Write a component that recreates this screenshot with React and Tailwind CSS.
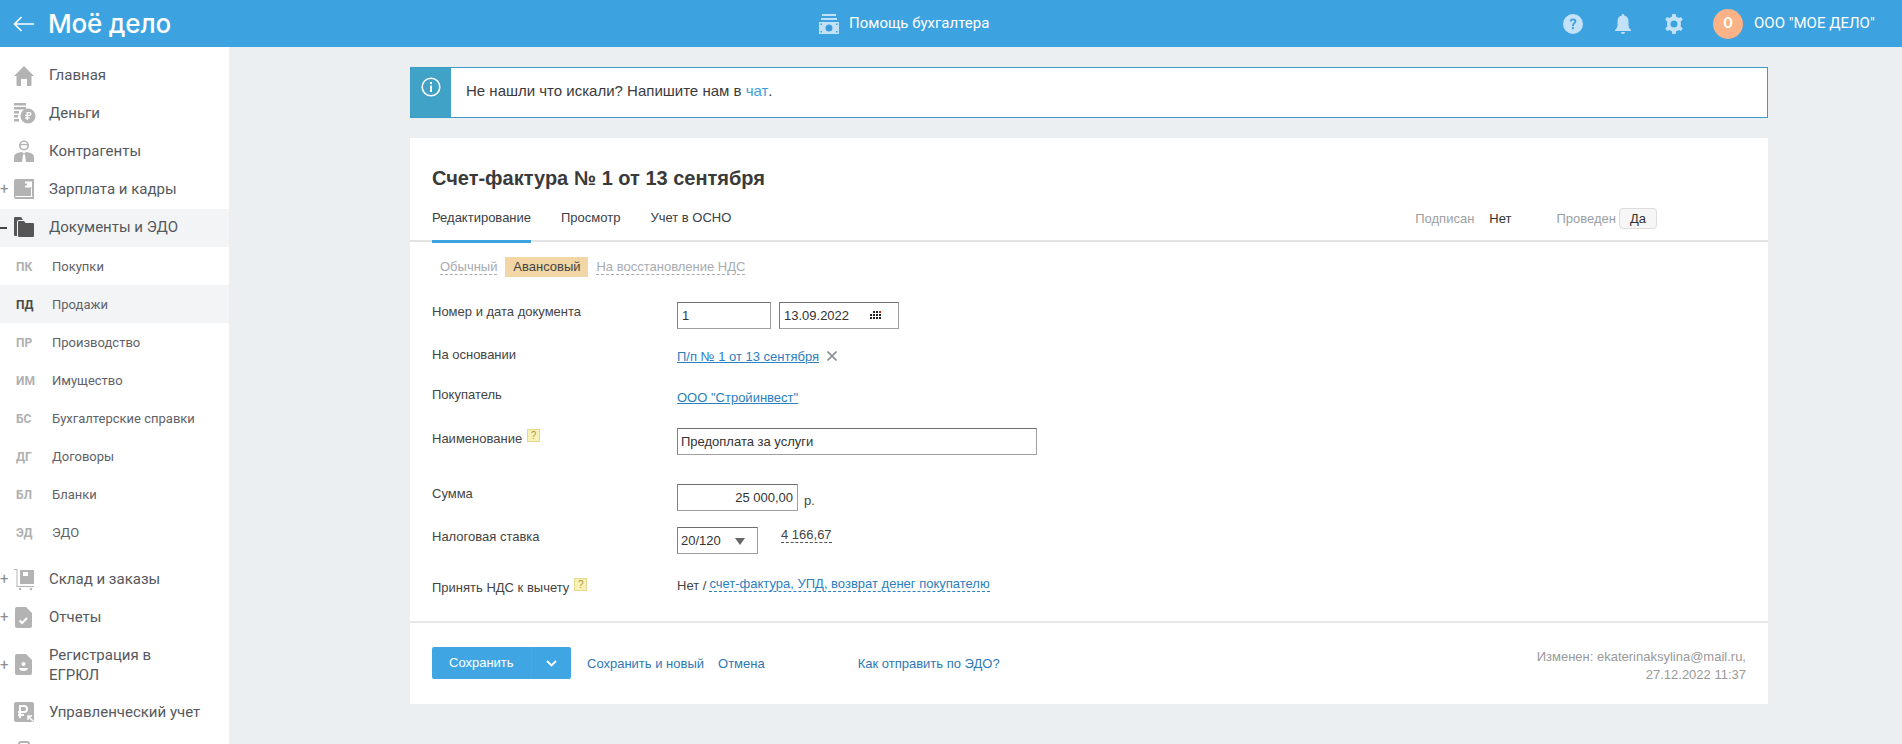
import React from "react";

const Gray = "#b3b3b3";

const icons = {
  home: (c) => <path fill={c} d="M10 1 L20 11 H17.5 V20 Q17.5 21 16.5 21 H13 V14 H7 V21 H3.5 Q2.5 21 2.5 20 V11 H0 Z" />,
  money: (c) => (
    <g fill={c}>
      <rect x="0" y="0" width="12" height="2.5" /><rect x="0" y="4" width="12" height="2.5" />
      <rect x="0" y="8" width="5" height="2.5" /><rect x="0" y="12" width="4" height="2.5" /><rect x="0" y="16" width="5" height="2.5" />
      <circle cx="14" cy="13" r="7.5" />
      <path d="M12.5 9 H15.5 Q17.5 9 17.5 11 Q17.5 13 15.5 13 H13.8 V14.2 H16 V15.4 H13.8 V17 H12.5 V15.4 H11 V14.2 H12.5 V13 H11 V11.8 H12.5 Z M13.8 10.2 V11.8 H15.4 Q16.2 11.8 16.2 11 Q16.2 10.2 15.4 10.2 Z" fill="#fff" />
    </g>
  ),
  person: (c) => (
    <g fill={c}>
      <circle cx="10" cy="4.5" r="4.2" fill="none" stroke={c} strokeWidth="1.6" />
      <path d="M5.8 3 H14.2 V4.2 H5.8 Z" />
      <path d="M0 21 V16 Q0 12.5 5 11.5 L8 11 L10 12.5 L12 11 L15 11.5 Q20 12.5 20 16 V21 H12 L11 13.5 H9 L8 21 Z" />
    </g>
  ),
  wallet: (c) => (
    <g fill={c}>
      <path fillRule="evenodd" d="M0 2 Q0 0 2 0 H20 V20 H2 Q0 20 0 18 Z M11 2.5 V8.5 H18 V2.5 Z" />
      <rect x="11" y="4.5" width="2" height="2" />
      <rect x="1.5" y="17" width="17" height="1" fill="#fff" />
      <rect x="17" y="9" width="1" height="8" fill="#fff" />
    </g>
  ),
  folder: (c) => (
    <g fill={c}>
      <path d="M0 1 Q0 0 1 0 H7 L9 3 H5 Q3 3 3 5 V19 H1 Q0 19 0 18 Z" />
      <path d="M4 5 Q4 4 5 4 H10 L11.5 6 H19 Q20 6 20 7 V19 Q20 20 19 20 H5 Q4 20 4 19 Z" />
    </g>
  ),
  cart: (c) => (
    <g fill={c}>
      <path d="M0 0 H3.5 V17 H20 V18 H2.5 V1 H0 Z" />
      <path d="M6 1 H20 V15 H6 Z M9 3 V7 H14 V3 Z" fillRule="evenodd" />
      <circle cx="6" cy="20" r="1.2" /><circle cx="17" cy="20" r="1.2" />
    </g>
  ),
  report: (c) => (
    <g>
      <path fill={c} d="M3 0 H12 L18 6 V19 Q18 21 16 21 H3 Q1 21 1 19 V2 Q1 0 3 0 Z" />
      <path fill="none" stroke="#fff" strokeWidth="2" d="M5.5 13.5 L8 16 L13 11" />
    </g>
  ),
  reg: (c) => (
    <g>
      <path fill={c} d="M3 0 H12 L18 6 V19 Q18 21 16 21 H3 Q1 21 1 19 V2 Q1 0 3 0 Z" />
      <circle cx="9.5" cy="10" r="2" fill="#fff" />
      <path fill="#fff" d="M5 14 H14 Q13.5 17 9.5 17 Q5.5 17 5 14 Z" />
    </g>
  ),
  rub: (c) => (
    <g>
      <rect x="0" y="0" width="20" height="20" rx="2" fill={c} />
      <path fill="none" stroke="#fff" strokeWidth="2" d="M6 16 V4 H10 Q13 4 13 7 Q13 10 10 10 H4 M4 13 H10" />
      <path fill="none" stroke="#fff" strokeWidth="1.5" d="M19 19 L14 14 M14 18 V14 H18" />
    </g>
  ),
};

function MainItem({ icon, label, plus, active, tall, iconColor }) {
  return (
    <div className={`relative flex items-center pl-[14px] ${tall ? "h-[57px]" : "h-[38px]"} ${active ? "bg-[#f3f4f5] pb-[2px]" : ""}`}>
      {plus && <span className="absolute left-0 top-1/2 -translate-y-1/2 text-[15px] leading-none text-[#8c8c8c]">+</span>}
      {active && <span className="absolute left-0 top-1/2 h-[2px] w-[7px] -translate-y-1/2 bg-[#444]" />}
      <svg width="20" height="21" viewBox="0 0 20 21" className="shrink-0 overflow-visible">{icons[icon](iconColor || Gray)}</svg>
      <span className="ml-[15px] w-[170px] text-[15px] leading-[20px] text-[#55595e]">{label}</span>
    </div>
  );
}

function SubItem({ code, label, active }) {
  return (
    <div className={`flex h-[38px] items-center pl-[16px] pt-[2px] ${active ? "bg-[#f3f4f5]" : ""}`}>
      <span className={`w-[36px] text-[12px] font-bold ${active ? "text-[#4a4a4a]" : "text-[#b0b0b0]"}`}>{code}</span>
      <span className="text-[13px] text-[#5f6368]">{label}</span>
    </div>
  );
}

function Sidebar() {
  return (
    <aside className="h-full w-[229px] shrink-0 overflow-hidden bg-white pt-[9px] font-['Roboto',sans-serif]">
      <MainItem icon="home" label="Главная" />
      <MainItem icon="money" label="Деньги" />
      <MainItem icon="person" label="Контрагенты" />
      <MainItem icon="wallet" label="Зарплата и кадры" plus />
      <div className="h-[1px]" />
      <MainItem icon="folder" label="Документы и ЭДО" active iconColor="#555" />
      <SubItem code="ПК" label="Покупки" />
      <SubItem code="ПД" label="Продажи" active />
      <SubItem code="ПР" label="Производство" />
      <SubItem code="ИМ" label="Имущество" />
      <SubItem code="БС" label="Бухгалтерские справки" />
      <SubItem code="ДГ" label="Договоры" />
      <SubItem code="БЛ" label="Бланки" />
      <SubItem code="ЭД" label="ЭДО" />
      <div className="h-[9px]" />
      <MainItem icon="cart" label="Склад и заказы" plus />
      <MainItem icon="report" label="Отчеты" plus />
      <MainItem icon="reg" label={<>Регистрация в<br />ЕГРЮЛ</>} plus tall />
      <MainItem icon="rub" label="Управленческий учет" />
      <div className="mt-[10px] ml-[18px] h-[10px] w-[12px] rounded-t-[3px] border-2 border-b-0 border-[#b3b3b3]" />
    </aside>
  );
}

function Header() {
  const ic = "#c3e2f7";
  return (
    <header className="relative flex h-[47px] shrink-0 items-center bg-[#3ca2e0] font-['Roboto',sans-serif] text-white">
      <svg width="22" height="16" viewBox="0 0 22 16" className="ml-[13px]" fill="none" stroke="#fff" strokeWidth="1.6">
        <path d="M21 8 H1.5 M8.5 1 L1.5 8 L8.5 15" />
      </svg>
      <span className="ml-[13px] font-['Inter',sans-serif] text-[26px] font-medium leading-none tracking-[-0.2px]">Моё дело</span>

      <div className="absolute left-[819px] top-0 flex h-[47px] items-center">
        <svg width="20" height="20" viewBox="0 0 20 20" fill={ic}>
          <rect x="3" y="0" width="14" height="2" />
          <rect x="2" y="4" width="16" height="2" />
          <path fillRule="evenodd" d="M0 8 H20 V20 H0 Z M10 10.5 A3.5 3.5 0 1 0 10 17.5 A3.5 3.5 0 1 0 10 10.5 Z M1.5 9.5 V11 H3 V9.5 Z M17 9.5 V11 H18.5 V9.5 Z M1.5 17 V18.5 H3 V17 Z M17 17 V18.5 H18.5 V17 Z" />
          <circle cx="10" cy="14" r="2.6" fill="#3c9ad8" />
        </svg>
        <span className="ml-[10px] text-[15px]">Помощь бухгалтера</span>
      </div>

      <div className="absolute left-[1563px] top-0 flex h-[47px] items-center">
        <svg width="20" height="20" viewBox="0 0 20 20">
          <circle cx="10" cy="10" r="10" fill={ic} />
          <path d="M6.8 7.6 Q7 4.4 10.2 4.4 Q13.4 4.5 13.4 7.2 Q13.4 8.8 11.8 9.8 Q10.8 10.5 10.8 12 H9 Q9 9.8 10.6 8.8 Q11.4 8.2 11.4 7.3 Q11.3 6.2 10.1 6.2 Q8.9 6.2 8.8 7.6 Z" fill="#3ca2e0" />
          <rect x="9" y="13" width="1.9" height="2.2" fill="#3ca2e0" />
        </svg>
        <svg width="18" height="20" viewBox="0 0 18 20" fill={ic} className="ml-[31px]">
          <path d="M9 0 Q10.2 0 10.2 1.4 Q14.5 2.4 14.5 7.5 V11.5 Q14.5 14 17 16 V17 H1 V16 Q3.5 14 3.5 11.5 V7.5 Q3.5 2.4 7.8 1.4 Q7.8 0 9 0 Z" />
          <path d="M6.8 18 H11.2 Q10.8 20 9 20 Q7.2 20 6.8 18 Z" />
        </svg>
        <svg width="20" height="20" viewBox="0 0 24 24" className="ml-[32px]">
          <path fill={ic} fillRule="evenodd" d="M10 0 H14 L14.6 3.2 Q16.2 3.7 17.5 4.7 L20.5 3.5 L22.5 7 L20 9 Q20.3 10.5 20.3 12 Q20.3 13.5 20 15 L22.5 17 L20.5 20.5 L17.5 19.3 Q16.2 20.3 14.6 20.8 L14 24 H10 L9.4 20.8 Q7.8 20.3 6.5 19.3 L3.5 20.5 L1.5 17 L4 15 Q3.7 13.5 3.7 12 Q3.7 10.5 4 9 L1.5 7 L3.5 3.5 L6.5 4.7 Q7.8 3.7 9.4 3.2 Z M12 7.8 A4.2 4.2 0 1 0 12 16.2 A4.2 4.2 0 1 0 12 7.8 Z" />
        </svg>
        <div className="ml-[29px] flex h-[30px] w-[30px] items-center justify-center rounded-full bg-[#fbb286] text-[14px] font-bold">О</div>
        <span className="ml-[11px] text-[15px]">ООО "МОЕ ДЕЛО"</span>
      </div>
    </header>
  );
}

function Help() {
  return <span className="ml-[5px] inline-flex h-[13px] w-[13px] items-center justify-center border border-[#e3d88f] bg-[#f9f1b8] text-[10px] leading-none text-[#a89a45]">?</span>;
}

function Row({ label, help, h, mb, children, labelTop = 0 }) {
  return (
    <div className={`flex ${h} ${mb}`}>
      <div className="flex w-[245px] shrink-0 items-start" style={{ paddingTop: labelTop }}>
        <span>{label}</span>{help && <Help />}
      </div>
      <div className="flex items-start">{children}</div>
    </div>
  );
}

const inputCls = "flex h-[27px] items-center border border-[#a0a0a0] border-t-[#6e6e6e] border-l-[#808080] bg-white pr-[4px] text-[13px] text-[#333]";

function Card() {
  return (
    <section className="mt-[20px] h-[566px] bg-white font-['Liberation_Sans',sans-serif] text-[13px] text-[#444]">
      <div className="px-[22px] pt-[27px]">
        <h1 className="text-[20px] font-bold leading-[26px] text-[#3a3a3a]">Счет-фактура № 1 от 13 сентября</h1>
      </div>
      <div className="mt-[13px] flex h-[38px] items-start border-b-2 border-[#e3e3e3] pl-[22px] pr-[111px]">
        <div className="relative flex h-[38px] w-[99px] items-start pt-[4px] text-[#3a4048]">
          Редактирование
          <span className="absolute bottom-[-1px] left-0 h-[3px] w-full bg-[#3ca2e0]" />
        </div>
        <span className="ml-[30px] pt-[4px] text-[#3a4048]">Просмотр</span>
        <span className="ml-[30px] pt-[4px] text-[#3a4048]">Учет в ОСНО</span>
        <div className="ml-auto flex items-center pt-[4px]">
          <span className="text-[#9a9ea3]">Подписан</span>
          <span className="ml-[15px] text-[#333]">Нет</span>
          <span className="ml-[45px] text-[#9a9ea3]">Проведен</span>
          <span className="ml-[3px] flex h-[21px] w-[38px] items-center justify-center rounded-[4px] border border-[#ddd] bg-[#f6f6f6] text-[#333]">Да</span>
        </div>
      </div>
      <div className="mt-[15px] flex h-[20px] items-center pl-[30px]">
        <span className="border-b border-dashed border-[#aaa] leading-[14px] text-[#a8acb0]">Обычный</span>
        <span className="ml-[8px] flex h-[20px] w-[83px] items-center justify-center bg-[#f2d6a6] text-[#444]">Авансовый</span>
        <span className="ml-[8px] border-b border-dashed border-[#aaa] leading-[14px] text-[#a8acb0]">На восстановление НДС</span>
      </div>

      <div className="mt-[25px] px-[22px]">
        <Row label="Номер и дата документа" h="h-[27px]" mb="mb-[16px]" labelTop={0}>
          <div className={`${inputCls} w-[94px] pl-[4px]`}>1</div>
          <div className={`${inputCls} relative ml-[8px] w-[120px] pl-[4px]`}>
            13.09.2022
            <svg width="11" height="9" viewBox="0 0 11 9" className="absolute left-[90px] top-[8px]">
              <g fill="#222">
                {[0, 3, 6].map((y) => [0, 3, 6, 9].map((x) => (x === 0 && y === 0 ? null : <rect key={`${x}-${y}`} x={x} y={y} width="2" height="2" fill={x === 9 && y === 0 ? "#e02020" : "#222"} />)))}
              </g>
            </svg>
          </div>
        </Row>
        <Row label="На основании" h="h-[20px]" mb="mb-[20px]" labelTop={0}>
          <a className="pt-[2px] text-[#2a80c0] underline">П/п № 1 от 13 сентября</a>
          <svg width="10" height="10" viewBox="0 0 10 10" className="ml-[8px] mt-[6px]" stroke="#8a8f94" strokeWidth="1.6"><path d="M0.5 0.5 L9.5 9.5 M9.5 0.5 L0.5 9.5" /></svg>
        </Row>
        <Row label="Покупатель" h="h-[20px]" mb="mb-[23px]">
          <a className="pt-[3px] text-[#2a80c0] underline">ООО "Стройинвест"</a>
        </Row>
        <Row label="Наименование" help h="h-[27px]" mb="mb-[29px]" labelTop={1}>
          <div className={`${inputCls} w-[360px] pl-[3px]`}>Предоплата за услуги</div>
        </Row>
        <Row label="Сумма" h="h-[27px]" mb="mb-[16px]" labelTop={0}>
          <div className={`${inputCls} w-[121px] justify-end pl-[3px]`}>25 000,00</div>
          <span className="ml-[6px] pt-[7px]">р.</span>
        </Row>
        <Row label="Налоговая ставка" h="h-[27px]" mb="mb-[22px]" labelTop={0}>
          <div className={`${inputCls} relative w-[81px] pl-[3px]`}>
            20/120
            <svg width="10" height="7" viewBox="0 0 10 7" className="absolute right-[12px] top-[10px]" fill="#666"><path d="M0 0 H10 L5 7 Z" /></svg>
          </div>
          <span className="ml-[23px] border-b border-dashed border-[#555] leading-[15px]">4 166,67</span>
        </Row>
        <Row label="Принять НДС к вычету" help h="h-[20px]" mb="" labelTop={2}>
          <span>Нет / </span>
          <span className="ml-[3px] border-b border-dashed border-[#2a80c0] leading-[15px] text-[#2a80c0]">счет-фактура, УПД, возврат денег покупателю</span>
        </Row>
      </div>

      <div className="mt-[25px] flex h-[83px] items-start border-t-2 border-[#e8e8e8] px-[22px]">
        <div className="mt-[24px] flex h-[32px] w-[139px] items-center rounded-[2px] bg-[#3fa6e3] text-white">
          <span className="w-[99px] pl-[17px]">Сохранить</span>
          <span className="flex h-full w-[40px] items-center justify-center border-l border-[#48a9e4]">
            <svg width="11" height="7" viewBox="0 0 11 7" fill="none" stroke="#fff" strokeWidth="1.8"><path d="M1 1 L5.5 5.5 L10 1" /></svg>
          </span>
        </div>
        <a className="ml-[16px] mt-[31px] text-[#2f78b5]">Сохранить и новый</a>
        <a className="ml-[14px] mt-[31px] text-[#2f78b5]">Отмена</a>
        <a className="ml-[93px] mt-[31px] text-[#2f78b5]">Как отправить по ЭДО?</a>
        <div className="ml-auto mt-[25px] text-right leading-[18px] text-[#999]">
          Изменен: ekaterinaksylina@mail.ru,<br />27.12.2022 11:37
        </div>
      </div>
    </section>
  );
}

export default function App() {
  return (
    <div className="flex h-screen w-full flex-col overflow-hidden bg-[#ebeff2]">
      <Header />
      <div className="flex min-h-0 flex-1">
        <Sidebar />
        <main className="ml-[181px] w-[1358px] pt-[20px]">
          <div className="flex h-[51px] border border-[#3d9cc4] bg-white font-['Liberation_Sans',sans-serif]">
            <div className="flex w-[40px] justify-center bg-[#41a2c8] pt-[9px]">
              <svg width="20" height="20" viewBox="0 0 20 20" fill="none">
                <circle cx="10" cy="10" r="8.8" stroke="#fff" strokeWidth="1.6" />
                <rect x="9" y="8.5" width="2" height="6.5" fill="#fff" />
                <rect x="9" y="5" width="2" height="2" fill="#fff" />
              </svg>
            </div>
            <div className="flex items-center pl-[15px] pb-[2px] text-[15px] text-[#3a3a3a]">
              Не нашли что искали? Напишите нам в&nbsp;<span className="text-[#3f9fdc]">чат</span>.
            </div>
          </div>
          <Card />
        </main>
      </div>
    </div>
  );
}
